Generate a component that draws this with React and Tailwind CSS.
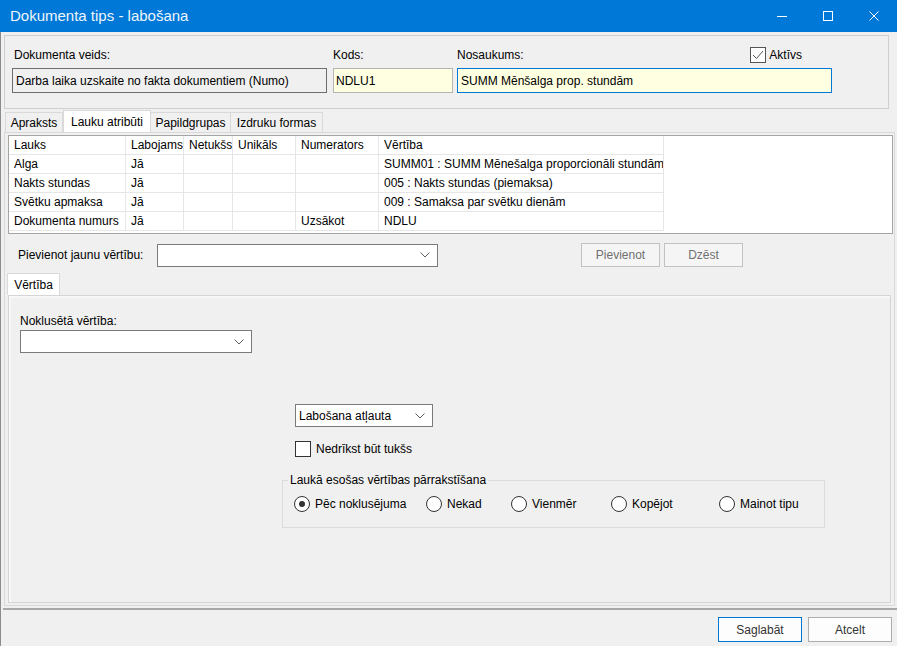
const font = { fontFamily: '"Liberation Sans", Arial, sans-serif' }

const cols = [117, 58, 49, 63, 83, 285]
const headers = ['Lauks', 'Labojams', 'Netukšs', 'Unikāls', 'Numerators', 'Vērtība']
const rows = [
  ['Alga', 'Jā', '', '', '', 'SUMM01 : SUMM Mēnešalga proporcionāli stundām'],
  ['Nakts stundas', 'Jā', '', '', '', '005 : Nakts stundas (piemaksa)'],
  ['Svētku apmaksa', 'Jā', '', '', '', '009 : Samaksa par svētku dienām'],
  ['Dokumenta numurs', 'Jā', '', '', 'Uzsākot', 'NDLU'],
]

function Chevron() {
  return (
    <svg width="10" height="6" viewBox="0 0 10 6">
      <polyline points="0.5,0.5 5,5 9.5,0.5" fill="none" stroke="#606060" strokeWidth="1" />
    </svg>
  )
}

function Combo({ className, text }) {
  return (
    <div className={'flex items-center bg-white border border-[#7a7a7a] pl-[3px] pr-[7px] ' + className}>
      <span className="flex-1 text-black">{text}</span>
      <Chevron />
    </div>
  )
}

function Radio({ label, checked, className }) {
  return (
    <div className={'flex items-center gap-[5px] ' + className}>
      <div className="w-[16px] h-[16px] rounded-full border border-[#333] bg-white flex items-center justify-center">
        {checked && <div className="w-[6px] h-[6px] rounded-full bg-[#333]" />}
      </div>
      <span>{label}</span>
    </div>
  )
}

export default function App() {
  return (
    <div className="w-[897px] h-[646px] overflow-hidden bg-[#f0f0f0] text-[12px] text-black" style={font}>
      {/* title bar */}
      <div className="h-[32px] bg-[#0078d7] flex items-center">
        <span className="pl-[10px] text-[15px] text-[#eef5fc] flex-1">Dokumenta tips - labošana</span>
        <div className="w-[46px] h-[32px] flex items-center justify-center">
          <div className="w-[10px] h-px bg-white" />
        </div>
        <div className="w-[46px] h-[32px] flex items-center justify-center">
          <div className="w-[10px] h-[10px] border border-white" />
        </div>
        <div className="w-[46px] h-[32px] flex items-center justify-center">
          <svg width="10" height="10" viewBox="0 0 10 10">
            <path d="M0.5 0.5 L9.5 9.5 M9.5 0.5 L0.5 9.5" stroke="white" strokeWidth="1" />
          </svg>
        </div>
      </div>

      <div className="h-[614px] border-l border-[#8c8c8c] flex flex-col">
        {/* header panel */}
        <div className="mt-[3px] ml-[3px] w-[885px] h-[74px] border border-[#cfcfcf] flex pl-[7px] pt-[11px]">
          <div className="w-[315px] flex flex-col">
            <div className="h-[16px] leading-[16px] pl-[2px]">Dokumenta veids:</div>
            <div className="mt-[5px] h-[25px] border border-[#6e6e6e] bg-[#f0f0f0] flex items-center pl-[3px]">
              Darba laika uzskaite no fakta dokumentiem (Numo)
            </div>
          </div>
          <div className="ml-[6px] w-[120px] flex flex-col">
            <div className="h-[16px] leading-[16px]">Kods:</div>
            <div className="mt-[5px] h-[25px] border border-[#b4b4b4] bg-[#ffffe1] flex items-center pl-[2px]">
              NDLU1
            </div>
          </div>
          <div className="ml-[4px] w-[375px] flex flex-col">
            <div className="h-[16px] leading-[16px] flex">
              <span>Nosaukums:</span>
              <div className="ml-auto mr-[30px] flex items-center gap-[3px]">
                <div className="w-[16px] h-[16px] border border-[#555] bg-white flex items-center justify-center">
                  <svg width="12" height="10" viewBox="0 0 12 10">
                    <polyline points="1,5 4.5,8.5 11,1" fill="none" stroke="#555" strokeWidth="1" />
                  </svg>
                </div>
                <span>Aktīvs</span>
              </div>
            </div>
            <div className="mt-[5px] h-[25px] border border-[#0078d7] bg-[#ffffe1] flex items-center pl-[3px]">
              SUMM Mēnšalga prop. stundām
            </div>
          </div>
        </div>

        {/* tabs */}
        <div className="mt-px ml-[4px] flex items-end h-[22px]">
          <div className="w-[58px] h-[20px] border border-b-0 border-[#d9d9d9] flex items-center justify-center">Apraksts</div>
          <div className="w-[88px] h-[22px] border border-b-0 border-[#d9d9d9] bg-white flex items-center justify-center">Lauku atribūti</div>
          <div className="w-[80px] h-[20px] border border-b-0 border-l-0 border-[#d9d9d9] flex items-center justify-center">Papildgrupas</div>
          <div className="w-[92px] h-[20px] border border-b-0 border-l-0 border-[#d9d9d9] flex items-center justify-center">Izdruku formas</div>
        </div>

        <div className="ml-[3px] w-[891px] h-[474px] border border-[#d9d9d9] flex flex-col pl-[3px] pt-[2px]">
          {/* grid */}
          <div className="w-[885px] h-[99px] bg-white border border-[#a5a5a5]">
            <div className="flex h-[19px]">
              {headers.map((h, i) => (
                <div
                  key={h}
                  style={{ width: cols[i] }}
                  className="pl-[5px] border-r border-b border-[#e6e6e6] overflow-hidden whitespace-nowrap leading-[18px]"
                >
                  {h}
                </div>
              ))}
            </div>
            {rows.map((r, ri) => (
              <div key={ri} className="flex h-[19px]">
                {r.map((c, i) => (
                  <div
                    key={i}
                    style={{ width: cols[i] }}
                    className="pl-[5px] border-r border-b border-[#e6e6e6] overflow-hidden whitespace-nowrap leading-[18px]"
                  >
                    {c}
                  </div>
                ))}
              </div>
            ))}
          </div>

          {/* add row */}
          <div className="mt-[9px] flex items-center h-[24px]">
            <span className="ml-[10px] w-[139px]">Pievienot jaunu vērtību:</span>
            <Combo className="w-[281px] h-[23px]" />
            <button className="ml-[143px] w-[79px] h-[24px] border border-[#c2c2c2] bg-[#f5f5f5] text-[#707070]">Pievienot</button>
            <button className="ml-[4px] w-[79px] h-[24px] border border-[#c2c2c2] bg-[#f5f5f5] text-[#707070]">Dzēst</button>
          </div>

          {/* inner tab */}
          <div className="mt-[6px] ml-[-1px] w-[53px] h-[22px] border border-b-0 border-[#d9d9d9] bg-white flex items-center justify-center">
            Vērtība
          </div>
          <div className="w-[883px] h-[308px] border border-[#d5d5d5] bg-[#f8f8f8] pl-[2px] pt-[2px]">
            <div className="h-full bg-[#f0f0f0] flex flex-col">
              <div className="mt-[16px] ml-[9px] h-[14px] leading-[14px]">Noklusētā vērtība:</div>
              <Combo className="mt-[2px] ml-[9px] w-[232px] h-[23px]" />

              <Combo className="mt-[51px] ml-[284px] w-[138px] h-[23px]" text="Labošana atļauta" />

              <div className="mt-[13px] ml-[284px] flex items-center gap-[5px]">
                <div className="w-[16px] h-[16px] border border-[#333] bg-white" />
                <span>Nedrīkst būt tukšs</span>
              </div>

              <fieldset className="mt-[15px] ml-[271px] w-[543px] border border-[#dcdcdc] pl-[5px] pt-[8px] pb-[14px]">
                <legend className="px-[2px] leading-[14px]">Laukā esošas vērtības pārrakstīšana</legend>
                <div className="flex">
                  <Radio className="ml-[6px] w-[132px]" label="Pēc noklusējuma" checked />
                  <Radio className="w-[85px]" label="Nekad" />
                  <Radio className="w-[100px]" label="Vienmēr" />
                  <Radio className="w-[108px]" label="Kopējot" />
                  <Radio label="Mainot tipu" />
                </div>
              </fieldset>
            </div>
          </div>
        </div>

        {/* footer */}
        <div className="mt-[2px] ml-[2px] h-[2px] bg-[#a8a8a8]" />
        <div className="mt-[7px] flex justify-end gap-[6px] pr-[5px]">
          <button className="w-[84px] h-[25px] border border-[#0078d7] bg-[#fdfdfd] text-[#333]">Saglabāt</button>
          <button className="w-[84px] h-[25px] border border-[#adadad] bg-[#fdfdfd] text-[#333]">Atcelt</button>
        </div>
      </div>
    </div>
  )
}
